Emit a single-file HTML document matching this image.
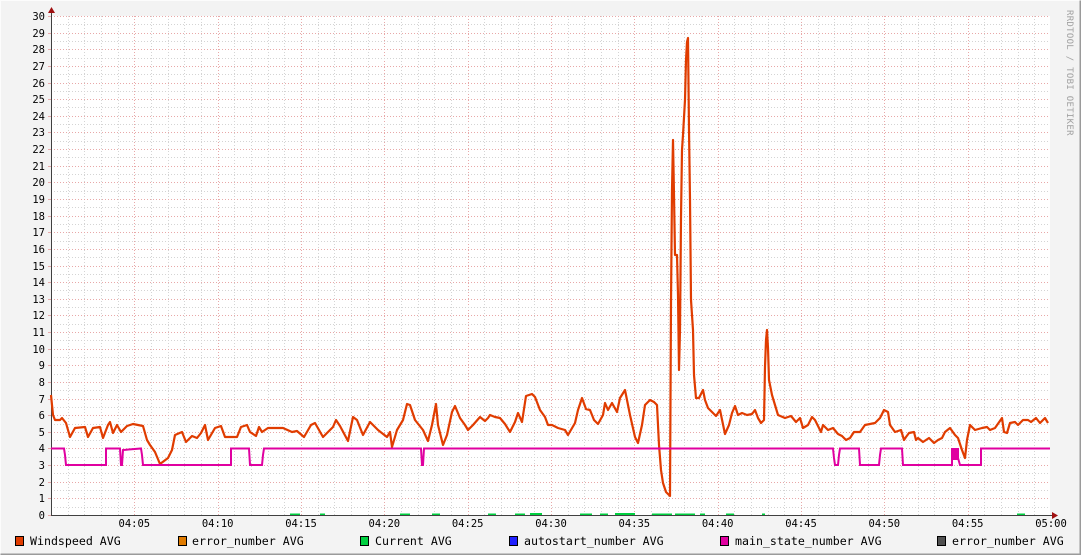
<!DOCTYPE html>
<html><head><meta charset="utf-8"><style>
html,body{margin:0;padding:0;background:#f3f3f3;}
svg{display:block;}
text{font-family:"DejaVu Sans Mono","Liberation Mono",monospace;}
</style></head><body>
<svg width="1081" height="555" xmlns="http://www.w3.org/2000/svg">
<rect x="0" y="0" width="1081" height="555" fill="#f3f3f3"/>
<path d="M0.5 554.5V0.5H1080.5" stroke="#fcfcfc" fill="none"/>
<path d="M1080.5 0.5V554.5H0.5" stroke="#9a9a9a" fill="none" stroke-width="2"/>
<rect x="51" y="16" width="999" height="499" fill="#ffffff"/>
<g id="g2"></g>
<text x="1067" y="10" transform="rotate(90 1067 10)" font-size="9" fill="#a0a0a0" letter-spacing="0.3">RRDTOOL / TOBI OETIKER</text>
<g id="ylab" font-size="10.5" fill="#000" text-anchor="end"></g>
<g id="xlab" font-size="10.5" fill="#000" text-anchor="middle"></g>
<path d="M51.5 10V515.5H1054" stroke="#404040" fill="none"/>
<path d="M48 13L51.5 7L55 13Z" fill="#a01010"/>
<path d="M1052 512L1058 515.5L1052 519Z" fill="#a01010"/>
<g fill="#00d040">
<rect x="290" y="513.5" width="10" height="1.5"/><rect x="320" y="513.5" width="5" height="1.5"/><rect x="400" y="513.5" width="10" height="1.5"/><rect x="432" y="513.5" width="8" height="1.5"/><rect x="488" y="513.5" width="8" height="1.5"/><rect x="515" y="513.5" width="10" height="1.5"/><rect x="530" y="513" width="12" height="2"/><rect x="580" y="513.5" width="12" height="1.5"/><rect x="600" y="513.5" width="8" height="1.5"/><rect x="615" y="513" width="20" height="2"/><rect x="652" y="513.5" width="20" height="1.5"/><rect x="675" y="513.5" width="20" height="1.5"/><rect x="700" y="513.5" width="5" height="1.5"/><rect x="726" y="513.5" width="8" height="1.5"/><rect x="762" y="513.5" width="3" height="1.5"/><rect x="1017" y="513.5" width="8" height="1.5"/>
</g>
<polyline fill="none" stroke="#e03c00" stroke-width="2.2" stroke-linejoin="round" points="51,395 53,415 55,420 60,420 62,418 66,423 70,437 75,428 85,427 88,437 93,428 100,427 103,438 108,425 110,422 113,433 117,425 121,432 127,426 133,424 143,426 147,440 150,445 155,452 160,464 168,458 172,450 175,435 182,432 186,442 192,436 197,438 201,433 205,425 208,440 215,428 221,426 225,437 237,437 241,427 247,425 250,432 256,436 259,427 262,432 268,428 283,428 292,432 297,431 304,437 311,425 315,423 323,437 333,427 336,420 340,426 348,441 353,417 357,420 363,435 370,422 378,430 387,437 390,432 392,447 397,430 403,420 407,404 410,405 415,420 423,430 428,441 432,425 436,404 438,425 443,445 447,435 452,412 455,406 460,418 465,425 468,430 473,425 480,417 485,421 488,418 490,415 495,417 500,418 505,424 510,432 515,422 518,413 522,422 526,396 532,394 535,397 540,410 545,417 548,425 552,425 558,428 565,430 568,435 575,423 578,410 582,398 586,409 590,410 594,420 598,424 603,415 605,403 608,410 612,403 617,412 620,398 625,390 630,415 635,437 638,443 642,425 645,405 650,400 654,402 657,405 659,445 661,470 663,483 666,492 670,496 671,303 672,190 673,140 674,195 675,255 677,255 678,295 679,370 680,330 681,217 682,150 683,135 685,100 686,60 687,42 688,38 689,130 690,200 691,300 693,330 694,375 696,398 699,398 703,390 705,400 708,408 712,412 716,416 720,410 725,434 729,425 732,413 735,406 738,415 742,413 747,415 752,414 755,410 758,418 761,423 764,420 765,367 766,340 767,330 768,348 769,380 772,395 775,405 778,415 785,418 791,416 796,422 800,418 803,428 808,425 812,417 815,420 821,432 823,425 828,430 833,428 838,434 842,436 846,440 850,438 854,432 860,432 865,425 870,424 875,423 880,418 884,410 888,412 890,425 895,432 901,430 904,440 906,437 909,433 914,432 916,440 918,438 923,442 929,438 934,443 938,440 942,438 945,432 950,428 955,435 958,438 962,450 965,458 967,440 970,425 975,430 982,428 987,427 990,430 995,428 1002,418 1004,432 1007,433 1010,423 1015,422 1018,425 1023,420 1028,420 1031,422 1036,418 1040,423 1045,418 1048,423"/>
<polyline fill="none" stroke="#e000a0" stroke-width="2" points="51,448.5 64,448.5 65,455 66,465 106,465 106,448.5 120,448.5 121,465 122,465 123,450 141,448.5 142,455 143,465 231,465 231,448.5 249,448.5 250,465 262,465 263,455 264,448.5 421,448.5 422,465 423,465 424,448.5 833,448.5 834,458 835,465 838,465 839,455 840,448.5 859,448.5 860,465 879,465 880,455 881,448.5 902,448.5 903,465 952,465 952,449 958,449 958,458 960,465 981,465 981,448.5 1050,448.5"/>
<rect x="952" y="448" width="6" height="12" fill="#e000a0"/>
<g font-size="11.6" fill="#000">
<rect x="15.5" y="536.5" width="8" height="9" fill="#e03c00" stroke="#000"/><text x="30" y="545">Windspeed AVG</text>
<rect x="178.5" y="536.5" width="8" height="9" fill="#e07b00" stroke="#000"/><text x="192" y="545">error_number AVG</text>
<rect x="360.5" y="536.5" width="8" height="9" fill="#00d040" stroke="#000"/><text x="375" y="545">Current AVG</text>
<rect x="509.5" y="536.5" width="8" height="9" fill="#2020ff" stroke="#000"/><text x="524" y="545">autostart_number AVG</text>
<rect x="720.5" y="536.5" width="8" height="9" fill="#e000a0" stroke="#000"/><text x="735" y="545">main_state_number AVG</text>
<rect x="937.5" y="536.5" width="8" height="9" fill="#505050" stroke="#000"/><text x="952" y="545">error_number AVG</text>
</g>
<script>
(function(){
var ns="http://www.w3.org/2000/svg";
var g=document.getElementById("g2");
function line(x1,y1,x2,y2,c){var l=document.createElementNS(ns,"line");l.setAttribute("x1",x1);l.setAttribute("y1",y1);l.setAttribute("x2",x2);l.setAttribute("y2",y2);l.setAttribute("stroke",c);l.setAttribute("stroke-dasharray","1,2");g.appendChild(l);}
function Y(v){return 515-v*499/30;}
for(var i=1;i<60;i++){var x=Math.round(51+i*1000/60)+0.5;line(x,16,x,515,i%5==0?"#e8a8a8":"#d4d4d4");}
for(var h=1;h<=60;h++){var y=Math.round(Y(h/2))+0.5;line(51,y,1050,y,h%2==0?"#e8a8a8":"#d4d4d4");}
var yl=document.getElementById("ylab");
for(var v=0;v<=30;v++){var t=document.createElementNS(ns,"text");t.setAttribute("x",45);t.setAttribute("y",Math.round(Y(v))+4);t.textContent=v;yl.appendChild(t);
var k=document.createElementNS(ns,"line");k.setAttribute("x1",48);k.setAttribute("x2",51);k.setAttribute("y1",Math.round(Y(v))+0.5);k.setAttribute("y2",Math.round(Y(v))+0.5);k.setAttribute("stroke","#e8a8a8");g.appendChild(k);}
var xl=document.getElementById("xlab");
for(var m=5;m<=60;m+=5){var t=document.createElementNS(ns,"text");t.setAttribute("x",51+m*1000/60);t.setAttribute("y",527);t.textContent=m==60?"05:00":"04:"+(m<10?"0":"")+m;xl.appendChild(t);}
})();
</script>
</svg>
</body></html>
